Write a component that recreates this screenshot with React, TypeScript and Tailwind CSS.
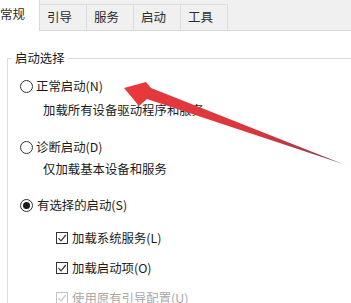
import React from "react";

const tabs = ["引导", "服务", "启动", "工具"];

function Radio({ checked }: { checked?: boolean }) {
  return (
    <span className="w-[13px] h-[13px] rounded-full border border-[#333] flex items-center justify-center shrink-0">
      {checked && <span className="w-[7px] h-[7px] rounded-full bg-[#1a1a1a]" />}
    </span>
  );
}

function Check({ disabled }: { disabled?: boolean }) {
  const c = disabled ? "#c4c4c4" : "#333";
  return (
    <span
      className={`w-[12px] h-[12px] border flex items-center justify-center shrink-0 ${
        disabled ? "border-[#c4c4c4]" : "border-[#333]"
      }`}
    >
      <svg width="10" height="10" viewBox="0 0 10 10">
        <path d="M1.5 5.2 L4 7.8 L8.8 2" fill="none" stroke={c} strokeWidth="1.2" />
      </svg>
    </span>
  );
}

export default function App() {
  return (
    <div
      className="relative w-[351px] h-[303px] overflow-hidden bg-white text-[12.4px] text-[#1b1b1b]"
      style={{ fontFamily: '"Noto Sans CJK SC", "Noto Sans", sans-serif' }}
    >
      {/* tab strip */}
      <div className="flex h-[31px] bg-[#f0f0f0] border-b border-[#d9d9d9] text-[#2b2b2b] text-[12.5px]">
        <div className="w-[40px] h-[31px] -mb-px bg-white border-r border-[#d9d9d9] flex items-center pl-0 pb-[2px] leading-none">
          常规
        </div>
        {tabs.map((t) => (
          <div
            key={t}
            className="w-[47px] h-[26px] mt-[4px] border-r border-t border-[#dcdcdc] flex items-center pl-[7px] leading-none"
          >
            {t}
          </div>
        ))}
      </div>

      {/* group box */}
      <div className="pl-[7px] pt-[18px]">
        <fieldset className="w-[360px] h-[280px] border-t border-l border-[#dcdcdc]">
          <legend className="ml-[4px] px-[3px] leading-[18px]">启动选择</legend>
          <div className="pt-[9px] flex flex-col">
            <div className="h-[20px] flex items-center gap-[3px] pl-[12px]">
              <Radio />
              <span>正常启动(N)</span>
            </div>
            <div className="h-[20px] mt-[4px] flex items-center pl-[35px]">加载所有设备驱动程序和服务</div>
            <div className="h-[20px] mt-[17px] flex items-center gap-[3px] pl-[12px]">
              <Radio />
              <span>诊断启动(D)</span>
            </div>
            <div className="h-[20px] mt-[2px] flex items-center pl-[35px]">仅加载基本设备和服务</div>
            <div className="h-[20px] mt-[16px] flex items-center gap-[4px] pl-[12px]">
              <Radio checked />
              <span>有选择的启动(S)</span>
            </div>
            <div className="h-[20px] mt-[13px] flex items-center gap-[4px] pl-[48px]">
              <Check />
              <span>加载系统服务(L)</span>
            </div>
            <div className="h-[20px] mt-[10px] flex items-center gap-[4px] pl-[48px]">
              <Check />
              <span>加载启动项(O)</span>
            </div>
            <div className="h-[20px] mt-[10px] flex items-center gap-[4px] pl-[48px] text-[#a8a8a8]">
              <Check disabled />
              <span>使用原有引导配置(U)</span>
            </div>
          </div>
        </fieldset>
      </div>

      {/* red annotation arrow */}
      <svg className="absolute inset-0 pointer-events-none" width="351" height="303" viewBox="0 0 351 303">
        <defs>
          <linearGradient id="ar" x1="124" y1="88" x2="343" y2="164" gradientUnits="userSpaceOnUse">
            <stop offset="0" stopColor="#e8393c" />
            <stop offset="0.6" stopColor="#d9363d" />
            <stop offset="1" stopColor="#7d4650" />
          </linearGradient>
          <filter id="soft" x="-10%" y="-10%" width="120%" height="120%">
            <feGaussianBlur stdDeviation="0.6" />
          </filter>
        </defs>
        <polygon
          points="124,88 146,82 151,88 343,164 147,99 139,106"
          fill="url(#ar)"
          filter="url(#soft)"
        />
      </svg>
    </div>
  );
}
